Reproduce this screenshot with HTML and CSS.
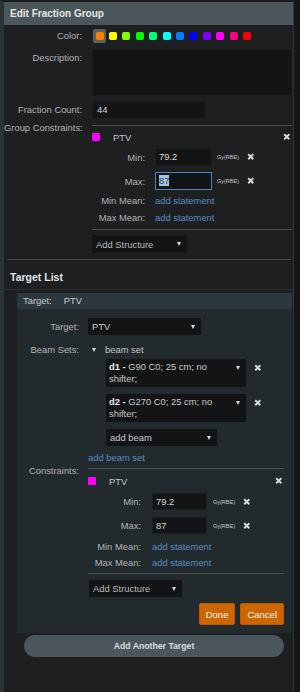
FILE: index.html
```html
<!DOCTYPE html>
<html>
<head>
    <meta charset="utf-8" />
    <title>Edit Fraction Group</title>
    <link rel="stylesheet" href="styles.css">
</head>
<body>
    <div class="dialog">
        <div class="dialog-title">Edit Fraction Group</div>

        <div class="form-row color-row">
            <div class="label">Color:</div>
            <div class="swatches">
                <span class="slot selected"><span class="swatch c-orange"></span></span>
                <span class="slot"><span class="swatch c-yellow"></span></span>
                <span class="slot"><span class="swatch c-lime"></span></span>
                <span class="slot"><span class="swatch c-green"></span></span>
                <span class="slot"><span class="swatch c-spring"></span></span>
                <span class="slot"><span class="swatch c-cyan"></span></span>
                <span class="slot"><span class="swatch c-azure"></span></span>
                <span class="slot"><span class="swatch c-blue"></span></span>
                <span class="slot"><span class="swatch c-violet"></span></span>
                <span class="slot"><span class="swatch c-magenta"></span></span>
                <span class="slot"><span class="swatch c-rose"></span></span>
                <span class="slot"><span class="swatch c-red"></span></span>
            </div>
        </div>

        <div class="form-row desc-row">
            <div class="label">Description:</div>
            <div class="field desc-field"></div>
        </div>

        <div class="form-row count-row">
            <div class="label">Fraction Count:</div>
            <div class="field count-field">44</div>
        </div>

        <div class="form-row group-row">
            <div class="label top-label">Group Constraints:</div>
            <div>
                <div class="constraint-box">
                    <div class="structure-row">
                        <span class="struct-color"></span>
                        <span class="struct-name">PTV</span>
                        <svg class="x-icon" viewBox="0 0 8 8"><path d="M1.3 1.3L6.7 6.7M6.7 1.3L1.3 6.7" /></svg>
                    </div>
                    <div class="limit-row">
                        <span class="limit-label">Min:</span>
                        <div class="field limit-field">79.2</div>
                        <span class="unit">Gy(RBE)</span>
                        <svg class="x-icon" viewBox="0 0 8 8"><path d="M1.3 1.3L6.7 6.7M6.7 1.3L1.3 6.7" /></svg>
                    </div>
                    <div class="limit-row second">
                        <span class="limit-label">Max:</span>
                        <div class="field limit-field focused"><span class="selection">87</span></div>
                        <span class="unit">Gy(RBE)</span>
                        <svg class="x-icon" viewBox="0 0 8 8"><path d="M1.3 1.3L6.7 6.7M6.7 1.3L1.3 6.7" /></svg>
                    </div>
                    <div class="mean-row first">
                        <span class="limit-label">Min Mean:</span>
                        <a class="link">add statement</a>
                    </div>
                    <div class="mean-row">
                        <span class="limit-label">Max Mean:</span>
                        <a class="link">add statement</a>
                    </div>
                </div>
                <div class="select structure-select">Add Structure<span class="arrow"></span></div>
            </div>
        </div>

        <div class="separator"></div>
        <div class="section-title">Target List</div>

        <div class="target-panel">
            <div class="target-head"><span>Target:</span><span class="target-head-name">PTV</span></div>
            <div class="target-body">
                <div class="panel-row target-row">
                    <div class="label">Target:</div>
                    <div class="select target-select">PTV<span class="arrow"></span></div>
                </div>

                <div class="panel-row beamsets-row">
                    <div class="label">Beam Sets:</div>
                    <div class="beamset-toggle"><span class="arrow"></span><span>beam set</span></div>
                </div>

                <div class="beam-list">
                    <div class="beam-row">
                        <div class="select beam-select"><span class="beam-text"><b>d1 -</b> G90 C0; 25 cm; no<br>shifter;</span><span class="arrow"></span></div>
                        <svg class="x-icon" viewBox="0 0 8 8"><path d="M1.3 1.3L6.7 6.7M6.7 1.3L1.3 6.7" /></svg>
                    </div>
                    <div class="beam-row">
                        <div class="select beam-select"><span class="beam-text"><b>d2 -</b> G270 C0; 25 cm; no<br>shifter;</span><span class="arrow"></span></div>
                        <svg class="x-icon" viewBox="0 0 8 8"><path d="M1.3 1.3L6.7 6.7M6.7 1.3L1.3 6.7" /></svg>
                    </div>
                    <div class="select add-beam">add beam<span class="arrow"></span></div>
                </div>

                <div class="panel-row beamset-link-row">
                    <div></div>
                    <a class="link">add beam set</a>
                </div>

                <div class="panel-row panel-constraints">
                    <div class="label top-label">Constraints:</div>
                    <div>
                        <div class="constraint-box">
                            <div class="structure-row">
                                <span class="struct-color"></span>
                                <span class="struct-name">PTV</span>
                                <svg class="x-icon" viewBox="0 0 8 8"><path d="M1.3 1.3L6.7 6.7M6.7 1.3L1.3 6.7" /></svg>
                            </div>
                            <div class="limit-row">
                                <span class="limit-label">Min:</span>
                                <div class="field limit-field">79.2</div>
                                <span class="unit">Gy(RBE)</span>
                                <svg class="x-icon" viewBox="0 0 8 8"><path d="M1.3 1.3L6.7 6.7M6.7 1.3L1.3 6.7" /></svg>
                            </div>
                            <div class="limit-row second">
                                <span class="limit-label">Max:</span>
                                <div class="field limit-field">87</div>
                                <span class="unit">Gy(RBE)</span>
                                <svg class="x-icon" viewBox="0 0 8 8"><path d="M1.3 1.3L6.7 6.7M6.7 1.3L1.3 6.7" /></svg>
                            </div>
                            <div class="mean-row first">
                                <span class="limit-label">Min Mean:</span>
                                <a class="link">add statement</a>
                            </div>
                            <div class="mean-row">
                                <span class="limit-label">Max Mean:</span>
                                <a class="link">add statement</a>
                            </div>
                        </div>
                        <div class="select structure-select">Add Structure<span class="arrow"></span></div>
                        <div class="button-row">
                            <button class="orange-button">Done</button>
                            <button class="orange-button">Cancel</button>
                        </div>
                    </div>
                </div>
            </div>
        </div>

        <button class="add-target-button">Add Another Target</button>
    </div>
</body>
</html>
```

FILE: styles.css
```css
* {
    box-sizing: border-box;
}

html, body {
    margin: 0;
    padding: 0;
}

body {
    background-color: #141617;
    font-family: "Liberation Sans", Arial, sans-serif;
    font-size: 9.4px;
    color: #b2b4b6;
}

.dialog {
    width: 294px;
    height: 692px;
    background-color: #1d1f21;
    border-top: 2px solid #1a1c1e;
    border-left: 4px solid #2a3336;
    border-right: 1px solid #30373a;
}

.dialog-title {
    height: 23px;
    line-height: 23px;
    padding-left: 6px;
    background-color: #4b565b;
    color: #e4e6e8;
    font-size: 10px;
    font-weight: bold;
}

/* label / value rows of the main form */
.form-row {
    display: grid;
    grid-template-columns: 78px 1fr;
    column-gap: 10px;
    padding-right: 1px;
}

.label {
    text-align: right;
    white-space: nowrap;
}

.top-label {
    line-height: 12px;
    margin-top: -3px;
}

.color-row {
    margin-top: 4px;
    height: 14px;
    line-height: 14px;
}

.swatches {
    display: flex;
    margin-left: 1px;
}

.slot {
    width: 13.4px;
    height: 14px;
    display: flex;
    align-items: center;
    justify-content: center;
    border-radius: 2px;
}

.slot.selected {
    background-color: #5b6164;
}

.swatch {
    width: 8px;
    height: 8px;
    border-radius: 2px;
}

.c-orange { background-color: #ff8000; }
.c-yellow { background-color: #ffff00; }
.c-lime { background-color: #80ff00; }
.c-green { background-color: #00ff00; }
.c-spring { background-color: #00ff80; }
.c-cyan { background-color: #00ffff; }
.c-azure { background-color: #0080ff; }
.c-blue { background-color: #0000ff; }
.c-violet { background-color: #8000ff; }
.c-magenta { background-color: #ff00ff; }
.c-rose { background-color: #ff0080; }
.c-red { background-color: #ff0000; }

.field {
    background-color: #131416;
    border: 1px solid #1b1d1f;
    color: #d4d6d8;
    padding-left: 4px;
    white-space: nowrap;
}

.desc-row {
    margin-top: 6px;
}

.desc-row .label {
    padding-top: 3px;
    line-height: 12px;
}

.desc-field {
    height: 47px;
}

.count-row {
    margin-top: 5px;
    line-height: 18px;
}

.count-field {
    width: 114px;
    height: 18px;
    line-height: 16px;
}

.group-row {
    margin-top: 6px;
}

/* structure constraint block */
.constraint-box {
    border-top: 1px solid #464b4e;
    border-bottom: 1px solid #464b4e;
    padding-top: 3px;
    padding-bottom: 3px;
}

.structure-row {
    display: flex;
    align-items: center;
    height: 16px;
    padding-right: 2px;
}

.struct-color {
    width: 8px;
    height: 8px;
    border-radius: 1px;
    background-color: #ff00ff;
}

.struct-name {
    margin-left: 13px;
    flex: 1;
    color: #c3c5c7;
}

.x-icon {
    width: 7.5px;
    height: 7.5px;
    fill: none;
    stroke: #d6d8d9;
    stroke-width: 2.1;
}

.limit-row {
    display: flex;
    align-items: center;
    margin-top: 3px;
    height: 18px;
}

.limit-row.second {
    margin-top: 6px;
}

.limit-label {
    width: 53px;
    text-align: right;
    margin-right: 10px;
    white-space: nowrap;
}

.limit-field {
    width: 57px;
    height: 18px;
    line-height: 16px;
    padding-left: 3px;
}

.limit-field.focused {
    border-color: #4b86b8;
}

.selection {
    background-color: #a9c3de;
    color: #23405e;
}

.unit {
    margin-left: 5px;
    width: 22px;
    font-size: 5.5px;
    color: #c4c6c8;
    white-space: nowrap;
}

.limit-row .x-icon {
    margin-left: 8px;
}

.mean-row {
    display: flex;
    align-items: center;
    height: 17px;
}

.mean-row.first {
    margin-top: 2px;
}

.link {
    color: #5b8ac1;
    cursor: pointer;
}

/* dropdowns */
.select {
    display: flex;
    align-items: center;
    justify-content: space-between;
    background-color: #131416;
    color: #c9cbcd;
    padding-left: 4px;
    padding-right: 6px;
    white-space: nowrap;
}

.arrow {
    width: 0;
    height: 0;
    border-left: 2.5px solid transparent;
    border-right: 2.5px solid transparent;
    border-top: 4px solid #d8dadb;
}

.structure-select {
    width: 95px;
    height: 18px;
    margin-top: 5px;
    color: #b9bbbd;
}

.separator {
    margin-top: 6px;
    margin-left: 3px;
    margin-right: 2px;
    height: 1px;
    background-color: #3f4548;
}

.section-title {
    padding: 10px 0 5px 6px;
    line-height: 14px;
    font-size: 10.5px;
    font-weight: bold;
    color: #e3e5e6;
    border-bottom: 1px solid #2b3033;
}

/* target panel */
.target-panel {
    margin: 3px 1px 0 13px;
    background-color: #222a2e;
    padding-bottom: 8px;
}

.target-head {
    height: 16px;
    line-height: 16px;
    padding-left: 6px;
    background-color: #2c383d;
    color: #c6cacc;
}

.target-head-name {
    margin-left: 12px;
}

.target-body {
    padding-top: 9px;
    padding-right: 8px;
}

.panel-row {
    display: grid;
    grid-template-columns: 62px 1fr;
    column-gap: 9px;
}

.target-row {
    height: 17px;
    line-height: 17px;
}

.target-select {
    width: 113px;
    height: 17px;
}

.beamsets-row {
    margin-top: 7px;
    height: 15px;
    line-height: 15px;
}

.beamset-toggle {
    display: flex;
    align-items: center;
    color: #c3c5c7;
}

.beamset-toggle .arrow {
    margin-left: 4px;
    margin-right: 9px;
}

.beam-list {
    margin-left: 89px;
    margin-top: 2px;
}

.beam-row {
    display: flex;
    align-items: flex-start;
    margin-bottom: 7px;
}

.beam-select {
    width: 140px;
    height: 28px;
    align-items: flex-start;
    padding: 2px 6px 0 3px;
}

.beam-text {
    width: 112px;
    line-height: 12px;
}

.beam-text b {
    color: #e6e8e9;
}

.beam-select .arrow {
    margin-top: 5px;
}

.beam-row .x-icon {
    margin-left: 7.5px;
    margin-top: 5px;
}

.add-beam {
    width: 111px;
    height: 17px;
}

.beamset-link-row {
    margin-top: 5px;
    height: 14px;
    line-height: 14px;
}

.panel-constraints {
    margin-top: 3px;
}

.panel-constraints .constraint-box {
    padding-top: 4px;
}

.panel-constraints .limit-row {
    margin-top: 4px;
    height: 17px;
}

.panel-constraints .limit-row.second {
    margin-top: 7px;
}

.panel-constraints .limit-label {
    margin-right: 11px;
}

.panel-constraints .limit-field {
    width: 55px;
    height: 17px;
    line-height: 15px;
}

.panel-constraints .unit {
    margin-left: 6px;
}

.panel-constraints .mean-row {
    height: 16px;
}

.panel-constraints .mean-row.first {
    margin-top: 4px;
}

.panel-constraints .structure-select {
    margin-top: 6px;
    margin-left: 1px;
    width: 93px;
    height: 17px;
}

.button-row {
    display: flex;
    justify-content: flex-end;
    gap: 5px;
    margin-top: 6px;
}

.orange-button {
    height: 22px;
    padding: 0 6px;
    border: 1px solid #b85c00;
    border-radius: 2px;
    background-color: #cd6600;
    color: #f4f4f4;
    font-family: "Liberation Sans", Arial, sans-serif;
    font-size: 9.5px;
}

.add-target-button {
    display: block;
    margin: 2px 0 0 20px;
    width: 260px;
    height: 22px;
    border: none;
    border-radius: 11px;
    background-color: #4a565b;
    color: #dcdedf;
    font-family: "Liberation Sans", Arial, sans-serif;
    font-size: 8.7px;
    font-weight: bold;
}
```
